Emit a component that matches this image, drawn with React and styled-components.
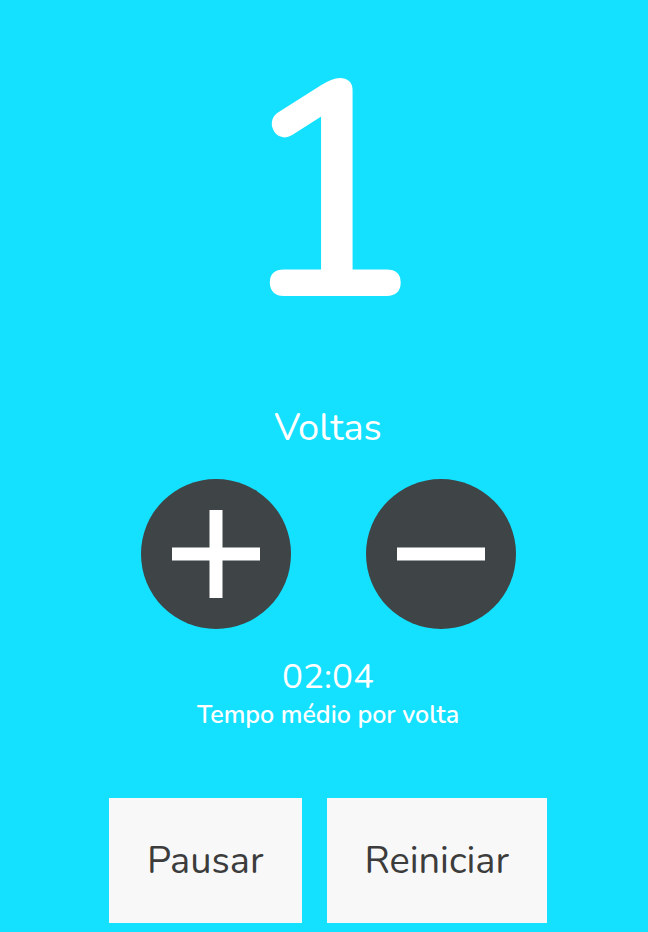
import React, { useState } from 'react';
import styled, { createGlobalStyle } from 'styled-components';

const GlobalStyle = createGlobalStyle`
  html, body {
    margin: 0;
    padding: 0;
    background: #13e1ff;
  }
  body {
    font-family: "Nunito", Lato, "Open Sans", sans-serif;
  }
`;

const Page = styled.div`
  min-height: 100vh;
  padding-left: 8px;
  display: flex;
  flex-direction: column;
  align-items: center;
  color: #ffffff;
`;

const Counter = styled.div`
  margin-top: 5px;
  font-size: 306px;
  line-height: 1.25;
  font-weight: 600;
`;

const Label = styled.div`
  margin-top: 21px;
  font-size: 38px;
  line-height: 38px;
`;

const Controls = styled.div`
  margin-top: 32px;
  display: flex;
  gap: 75px;
`;

const RoundButton = styled.button`
  width: 150px;
  height: 150px;
  border: none;
  border-radius: 50%;
  background: #3f4446;
  display: flex;
  align-items: center;
  justify-content: center;
  padding: 0;
  cursor: pointer;
`;

const Time = styled.div`
  margin-top: 30px;
  font-size: 35px;
  line-height: 35px;
`;

const Caption = styled.div`
  margin-top: 9px;
  font-size: 25px;
  line-height: 25px;
  font-weight: 600;
`;

const Actions = styled.div`
  margin-top: 70px;
  display: flex;
  gap: 25px;
`;

const ActionButton = styled.button`
  height: 125px;
  padding: 0 38px;
  border: none;
  background: #f8f8f8;
  color: #3c3c3c;
  font-family: inherit;
  font-size: 38px;
  cursor: pointer;
`;

const Icon = ({ minus }) => (
  <svg width="88" height="88" viewBox="0 0 88 88">
    <rect x="0" y="37.5" width="88" height="13" fill="#fff" />
    {!minus && <rect x="37.5" y="0" width="13" height="88" fill="#fff" />}
  </svg>
);

export default function App() {
  const [voltas, setVoltas] = useState(1);

  return (
    <>
      <GlobalStyle />
      <Page>
        <Counter>{voltas}</Counter>
        <Label>Voltas</Label>
        <Controls>
          <RoundButton onClick={() => setVoltas(voltas + 1)}>
            <Icon />
          </RoundButton>
          <RoundButton onClick={() => setVoltas(Math.max(0, voltas - 1))}>
            <Icon minus />
          </RoundButton>
        </Controls>
        <Time>02:04</Time>
        <Caption>Tempo médio por volta</Caption>
        <Actions>
          <ActionButton>Pausar</ActionButton>
          <ActionButton>Reiniciar</ActionButton>
        </Actions>
      </Page>
    </>
  );
}
